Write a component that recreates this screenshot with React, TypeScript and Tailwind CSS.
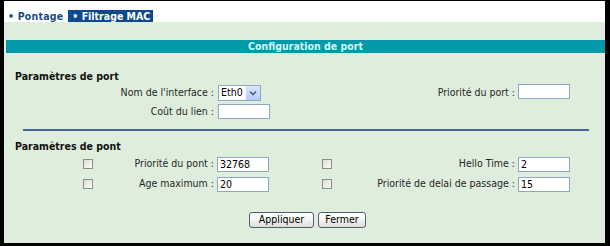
import React from "react";

const F = { fontFamily: '"DejaVu Sans Condensed", "DejaVu Sans", sans-serif', fontStretch: "condensed" as const };

function Input({ value = "", w = "w-[52px]" }: { value?: string; w?: string }) {
  return (
    <div className={`${w} h-[15px] bg-white border border-[#8fa7c4] text-[10.5px] leading-[13px] pl-[2px] text-black`}>
      {value}
    </div>
  );
}

function Check() {
  return <div className="w-[10px] h-[10px] border border-[#8d8d8d] bg-gradient-to-br from-[#dcdcd6] to-[#fbfbf9]" />;
}

function Label({ children }: { children: React.ReactNode }) {
  return <div className="text-right pr-[3px] whitespace-nowrap text-[10.5px] text-[#262626]">{children}</div>;
}

function Btn({ children, w }: { children: React.ReactNode; w: string }) {
  return (
    <div
      className={`${w} h-[16px] rounded-[3px] border border-[#4f5f78] bg-gradient-to-b from-white via-[#f4f4f0] to-[#dcdcd4] flex items-center justify-center text-[10.5px] text-black`}
    >
      {children}
    </div>
  );
}

export default function App() {
  return (
    <div
      className="w-[610px] h-[246px] bg-black pl-[4px] pt-[1px] pr-[5px] pb-[3px] overflow-hidden"
      style={F}
    >
      <div className="h-full flex flex-col bg-[#dfeedc]">
        {/* tab bar */}
        <div className="h-[21px] shrink-0 bg-white flex items-end pl-[2px]">
          <div className="h-[12px] pl-[2px] pr-[5px] flex items-center text-[10.5px] font-bold text-[#1a4d86] leading-none tracking-[0.2px]">
            • Pontage
          </div>
          <div className="h-[12px] bg-[#0e4a8c] pl-[4px] pr-[3px] flex items-center text-[10.5px] font-bold text-white leading-none">
            • Filtrage MAC
          </div>
        </div>

        {/* title bar */}
        <div className="mt-[18px] ml-[2px] h-[13px] bg-[#0499a9] flex items-center justify-center text-[10.5px] font-bold text-[#d6f6fa] leading-none">
          Configuration de port
        </div>

        {/* port params */}
        <div className="pl-[11px] mt-[17px]">
          <div className="h-[13px] text-[10.5px] leading-[13px] font-bold text-[#111]">Paramètres de port</div>
          <div className="grid grid-cols-[68px_12px_122px_52px_53px_12px_184px_52px] auto-rows-[19px] items-center">
            <div className="col-span-3">
              <Label>Nom de l'interface :</Label>
            </div>
            <div className="pl-[1px]">
              <div className="w-[43px] h-[16px] bg-white border border-[#8fa7c4] flex items-center justify-between">
                <span className="pl-[2px] text-[10.5px] leading-none text-black">Eth0</span>
                <div className="w-[14px] h-[14px] bg-gradient-to-b from-[#dbe6fd] to-[#b5cbf8] flex items-center justify-center">
                  <svg width="8" height="6" viewBox="0 0 8 6">
                    <path d="M1 1.5 L4 4.5 L7 1.5" fill="none" stroke="#4d6185" strokeWidth="1.6" />
                  </svg>
                </div>
              </div>
            </div>
            <div className="col-span-3">
              <Label>Priorité du port :</Label>
            </div>
            <div className="-mt-[3px]">
              <Input />
            </div>

            <div className="col-span-3">
              <Label>Coût du lien :</Label>
            </div>
            <div className="pl-[1px]">
              <Input />
            </div>
          </div>
        </div>

        {/* separator */}
        <div className="ml-[19px] w-[566px] h-[2px] bg-[#45659a] mt-[8px]" />

        {/* pont params */}
        <div className="pl-[11px] mt-[9px]">
          <div className="h-[13px] text-[10.5px] leading-[13px] font-bold text-[#111]">Paramètres de pont</div>
          <div className="mt-[1px] grid grid-cols-[68px_12px_122px_52px_53px_12px_184px_52px] auto-rows-[20px] items-center">
            <div />
            <Check />
            <Label>Priorité du pont :</Label>
            <Input value="32768" />
            <div />
            <Check />
            <Label>Hello Time :</Label>
            <Input value="2" />

            <div />
            <Check />
            <Label>Age maximum :</Label>
            <Input value="20" />
            <div />
            <Check />
            <Label>Priorité de delai de passage :</Label>
            <Input value="15" />
          </div>
        </div>

        {/* buttons */}
        <div className="mt-[18px] flex justify-center gap-[4px] pl-[6px]">
          <Btn w="w-[65px]">Appliquer</Btn>
          <Btn w="w-[48px]">Fermer</Btn>
        </div>
      </div>
    </div>
  );
}
